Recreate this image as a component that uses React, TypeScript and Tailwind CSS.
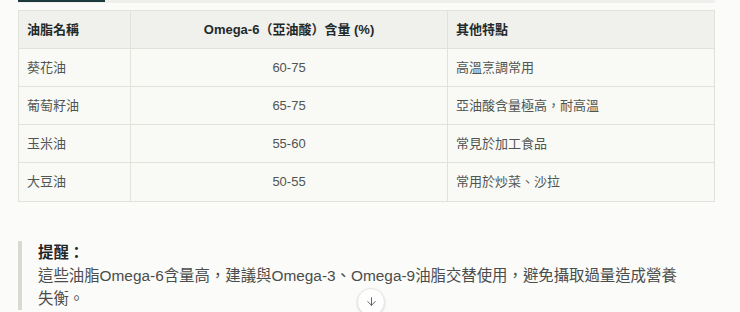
import React from "react";
import { ArrowDown } from "lucide-react";

const rows = [
  ["葵花油", "60-75", "高溫烹調常用"],
  ["葡萄籽油", "65-75", "亞油酸含量極高，耐高溫"],
  ["玉米油", "55-60", "常見於加工食品"],
  ["大豆油", "50-55", "常用於炒菜、沙拉"],
];

export default function App() {
  return (
    <div
      lang="zh-TW"
      className="relative w-[740px] h-[312px] overflow-hidden bg-[#fbfbf9]"
      style={{ fontFamily: '"Liberation Sans", "Noto Sans CJK TC", sans-serif' }}
    >
      <div className="ml-[18px] w-[697px]">
        <div className="flex h-[3px] bg-[#efefeb]">
          <div className="w-[87px] h-[2px] bg-[#1d3a3e]" />
        </div>
        <div className="mt-[7px] border border-[#e2e2dd] bg-[#f9f9f6]">
          <div className="grid grid-cols-[112px_317px_1fr] h-[38px] bg-[#f0f0ec] border-b border-[#e2e2dd] text-[13px] font-bold text-[#1f2a2a]">
            <div className="flex items-center pl-[8px] border-r border-[#e2e2dd]">油脂名稱</div>
            <div className="flex items-center justify-center border-r border-[#e2e2dd]">Omega-6（亞油酸）含量 (%)</div>
            <div className="flex items-center pl-[8px]">其他特點</div>
          </div>
          {rows.map((r, i) => (
            <div
              key={i}
              className={`grid grid-cols-[112px_317px_1fr] h-[38px] text-[13px] text-[#505552] ${i < rows.length - 1 ? "border-b border-[#e2e2dd]" : ""}`}
            >
              <div className="flex items-center pl-[8px] border-r border-[#e2e2dd]">{r[0]}</div>
              <div className="flex items-center justify-center border-r border-[#e2e2dd]">{r[1]}</div>
              <div className="flex items-center pl-[8px]">{r[2]}</div>
            </div>
          ))}
        </div>
        <div className="mt-[39px] border-l-4 border-[#d9d9d1] pl-[16px] text-[15.4px] leading-[23px] text-[#4a4d4c] w-[677px]">
          <div className="font-bold text-[#1f2626]">提醒：</div>
          <div className="w-[642px]">這些油脂Omega-6含量高，建議與Omega-3、Omega-9油脂交替使用，避免攝取過量造成營養失衡。</div>
        </div>
      </div>
      <div className="absolute left-[357px] top-[288px] w-[28px] h-[28px] rounded-full bg-white border border-[#e6e6e2] shadow-sm flex items-start justify-center pt-[6px] text-[#4a4d4c]">
        <ArrowDown size={13} strokeWidth={1.6} />
      </div>
    </div>
  );
}
